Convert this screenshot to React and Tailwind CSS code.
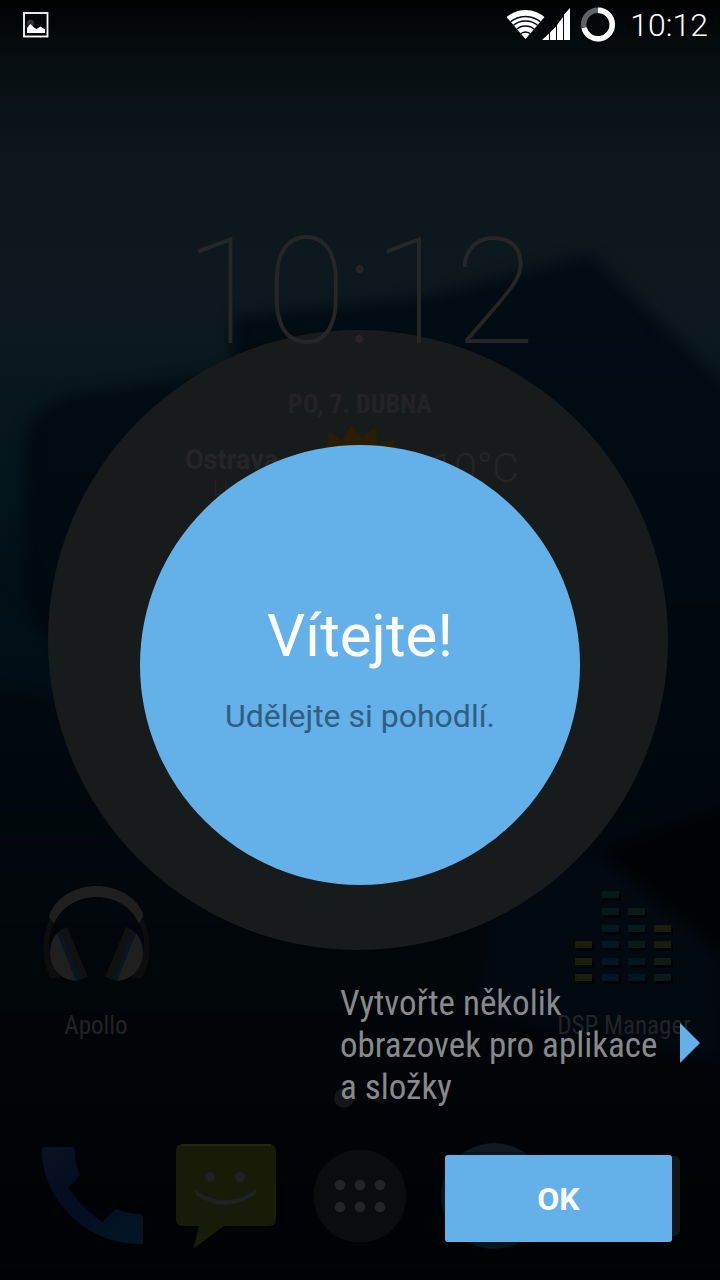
const condensed = "font-['Roboto_Condensed','Roboto',sans-serif]";

function Wallpaper() {
  return (
    <svg className="absolute inset-0 -z-10 h-full w-full" viewBox="0 0 720 1280" preserveAspectRatio="none" aria-hidden="true">
      <defs>
        <linearGradient id="sky" x1="0" y1="0" x2="0" y2="1">
          <stop offset="0" stopColor="#010202" />
          <stop offset="0.05" stopColor="#070e11" />
          <stop offset="0.12" stopColor="#0c171b" />
          <stop offset="0.24" stopColor="#0d191e" />
          <stop offset="0.38" stopColor="#04151c" />
          <stop offset="0.5" stopColor="#020d12" />
          <stop offset="0.65" stopColor="#01070a" />
          <stop offset="1" stopColor="#000203" />
        </linearGradient>
        <linearGradient id="shade" x1="0" y1="0" x2="0" y2="1">
          <stop offset="0" stopColor="#010c14" />
          <stop offset="0.5" stopColor="#01080d" />
          <stop offset="1" stopColor="#000203" />
        </linearGradient>
        <filter id="soft" x="-20%" y="-20%" width="140%" height="140%" colorInterpolationFilters="sRGB">
          <feGaussianBlur stdDeviation="7" />
        </filter>
      </defs>
      <rect width="720" height="1280" fill="url(#sky)" />
      <g filter="url(#soft)">
        <path d="M232 318 L430 296 L590 254 L740 400 V1300 H-20 V655 L45 655 Q25 620 24 560 L25 440 Q35 402 75 395 L232 372Z" fill="url(#shade)" />
        <path d="M-20 590 L60 645 L160 720 L-20 680Z" fill="#02121a" opacity="0.6" />
        <path d="M500 840 L600 860 L720 960 V1060 L480 1010Z" fill="#020911" />
        <path d="M600 850 L740 800 V960Z" fill="#000203" opacity="0.7" />
      </g>
    </svg>
  );
}

function Headphones() {
  return (
    <svg className="h-28 w-28" viewBox="0 0 112 112" aria-hidden="true">
      <path d="M10 34 Q-4 66 11 94 L22 94 Q2 68 13 40Z M103 34 Q117 66 102 94 L91 94 Q111 68 100 40Z" fill="#0d0d0e" />
      <path d="M10 29 C27 -7 86 -7 103 29 L103 33 L99 40 C84 4 29 4 14 40 L9 33Z" fill="#1f1f20" />
      <path d="M17 49 C4 64 9 95 36 97 L38 96Z M96 49 C109 64 104 95 77 97 L75 96Z" fill="#1f1f20" />
      <path d="M17 49 L21 46 L41 95 L36 97Z M96 49 L92 46 L72 95 L77 97Z" fill="#07171f" />
      <path d="M20 46 L27 43 L48 93 L40 96Z M93 46 L86 43 L65 93 L73 96Z" fill="#111112" />
    </svg>
  );
}

function Equalizer() {
  const bars = [
    [7, 80, '#191e0b'], [7, 97, '#191e0b'], [7, 113, '#191e0b'],
    [34, 30, '#07181a'], [34, 47, '#07181b'], [34, 64, '#07171d'], [34, 80, '#051722'], [34, 97, '#041526'], [34, 113, '#041526'],
    [60, 47, '#0c1a17'], [60, 64, '#081a1b'], [60, 80, '#0a191a'], [60, 97, '#04161e'], [60, 113, '#041620'],
    [86, 64, '#191e0b'], [86, 80, '#171d0e'], [86, 97, '#111b12'], [86, 113, '#0d1916'],
  ];
  return (
    <svg className="h-28 w-28" viewBox="0 23 112 112" aria-hidden="true">
      {bars.map(([x, y, c], i) => (
        <g key={i}>
          <rect x={x + 2} y={y + 3} width="17" height="7" fill="#000306" />
          <rect x={x} y={y} width="17" height="7" fill={c} />
        </g>
      ))}
    </svg>
  );
}

function HomeScreen() {
  return (
    <div className="col-start-1 row-start-1 flex flex-col pt-[210px]">
      <div className="text-center text-[148px] leading-[166px] font-thin text-[#262626]">10:12</div>
      <div className={`${condensed} mt-2 text-center text-[26px] leading-10 font-bold text-[#232324]`}>PO, 7. DUBNA</div>
      <div className="mx-auto grid w-[350px] grid-cols-3 text-[#242526]">
        <div className="pt-5">
          <div className="text-[27px] leading-8 font-bold">Ostrava</div>
          <div className="pl-7 text-[20px] leading-6 font-light">Li</div>
        </div>
        <svg className="h-[100px] w-[100px] justify-self-center" viewBox="0 0 100 100" aria-hidden="true">
          <path d="M19 8 L32 16 L41 1 L52 13 L65 3 L68 20 L85 15 L84 60 L10 60Z" fill="#2a1c05" />
        </svg>
        <div className="pt-5 pr-4 text-right text-[41px] leading-[48px] font-light">10°C</div>
      </div>
      <div className="mt-auto grid grid-cols-4 px-2 text-center text-[#222324]">
        <div className="flex flex-col items-center">
          <Headphones />
          <div className={`${condensed} mt-3 text-[25px] leading-9`}>Apollo</div>
        </div>
        <div className="col-start-4 flex flex-col items-center">
          <Equalizer />
          <div className={`${condensed} mt-3 text-[25px] leading-9 whitespace-nowrap`}>DSP Manager</div>
        </div>
      </div>
      <div className="mt-11 flex h-5 items-center justify-center gap-5 pr-1">
        <span className="h-5 w-5 rounded-full bg-[#141617]" />
        <span className="h-2 w-2 rounded-full bg-[#101213]" />
      </div>
      <div className="mt-8 mb-7 grid grid-cols-5 justify-items-center px-6">
        <svg className="h-28 w-28" viewBox="2 0 112 112" aria-hidden="true">
          <defs>
            <linearGradient id="phone" x1="0" y1="0" x2="1" y2="1">
              <stop offset="0" stopColor="#0b1220" />
              <stop offset="0.45" stopColor="#020d20" />
              <stop offset="1" stopColor="#031624" />
            </linearGradient>
          </defs>
          <path d="M11 7 H39 Q42 7 42 12 Q42 25 47 35 L35 48 Q50 68 69 82 L83 69 Q95 74 107 74 Q110 75 110 79 V104 C45 105 9 50 9 13 Q8 9 11 7Z" fill="url(#phone)" />
        </svg>
        <svg className="h-28 w-28" viewBox="0 0 112 112" aria-hidden="true">
          <path d="M13 4 H99 Q106 4 106 11 V79 Q106 86 99 86 H54 L23 109 L29 86 H13 Q6 86 6 79 V11 Q6 4 13 4Z" fill="#171b08" />
          <path d="M11 5 H101" stroke="#24270e" strokeWidth="2" />
          <circle cx="40" cy="37" r="5" fill="#202123" />
          <circle cx="70" cy="37" r="5" fill="#202123" />
          <path d="M25 50 Q55 70 86 50 V54 Q55 75 26 55Z" fill="#202123" />
        </svg>
        <svg className="h-28 w-28" viewBox="0 0 112 112" aria-hidden="true">
          <circle cx="56" cy="56" r="46.5" fill="#090d0e" />
          {[36, 56, 76].map((x) => (
            <g key={x} fill="#232425">
              <circle cx={x} cy="45" r="5.3" />
              <circle cx={x} cy="67" r="5.3" />
            </g>
          ))}
        </svg>
        <svg className="h-28 w-28" viewBox="0 0 112 112" aria-hidden="true">
          <circle cx="56" cy="56" r="53" fill="#03151d" />
          <path d="M26 12 Q56 -5 86 12Z" fill="#12191f" />
        </svg>
        <svg className="h-28 w-28" viewBox="0 0 112 112" aria-hidden="true">
          <rect x="5" y="16" width="102" height="80" rx="6" fill="#151617" />
        </svg>
      </div>
    </div>
  );
}

function StatusBar() {
  return (
    <header className="flex h-[50px] items-center justify-between pr-3 pl-[22px]">
      <svg className="h-7 w-7" viewBox="0 0 28 28" aria-label="Snímek obrazovky" role="img">
        <rect x="2" y="2" width="23.5" height="23.5" fill="none" stroke="#fff" strokeWidth="1.8" />
        <circle cx="8.5" cy="12" r="3.5" fill="#303436" />
        <path d="M5 22 V17 L8.5 13 L12 16.5 L14.5 18 L18.5 15.5 L23 18.5 V22Z" fill="#fff" />
      </svg>
      <div className="flex items-center">
        <svg className="h-10 w-16" viewBox="0 0 64 40" aria-label="Wi-Fi a signál" role="img">
          <defs>
            <clipPath id="fan"><path d="M19.5 34 L0 11.5 Q19.5 -4 39 11.5Z" /></clipPath>
          </defs>
          <g clipPath="url(#fan)">
            <circle cx="19.5" cy="34" r="29" fill="#fff" />
            <g fill="none" stroke="#050809" strokeWidth="1.3">
              <circle cx="19.5" cy="35" r="8" />
              <circle cx="19.5" cy="35" r="14" />
              <circle cx="19.5" cy="35" r="19" />
              <circle cx="19.5" cy="35" r="23.5" />
            </g>
          </g>
          <path d="M36 35 L43 28.5 V35Z M44 27.5 L50 21.5 V35 H44Z M51 20 L57 14 V35 H51Z M58 9.5 L64 3 V35 H58Z" fill="#fff" />
          <path d="M51 20 L57 12 V15Z" fill="#fff" />
        </svg>
        <svg className="ml-2.5 h-9 w-9" viewBox="0 0 36 36" aria-label="Baterie" role="img">
          <circle cx="18" cy="17.5" r="14.3" fill="none" stroke="#606466" strokeWidth="5.4" />
          <path d="M18 3.2 A14.3 14.3 0 1 1 4.1 20.8" fill="none" stroke="#fff" strokeWidth="5.4" />
        </svg>
        <time className="ml-3.5 text-[32px] leading-10 font-light text-white">10:12</time>
      </div>
    </header>
  );
}

function Welcome() {
  return (
    <div className="z-10 col-start-1 row-start-1 flex flex-col">
      <StatusBar />
      <main className="mt-auto flex flex-col pb-[38px]">
        <section className="mx-auto flex h-[440px] w-[440px] flex-col items-center rounded-full bg-[#64b0e9] pt-[155px] text-center">
          <h1 className="text-[60px] leading-[72px] text-white">Vítejte!</h1>
          <p className="mt-6 text-[32px] leading-10 text-[#315e80]">Udělejte si pohodlí.</p>
        </section>
        <div className="mt-[98px] mr-5 ml-[340px] flex items-center justify-between">
          <p className={`${condensed} text-[35px] leading-[42px] text-[#87898a]`}>
            Vytvořte několik<br />obrazovek pro aplikace<br />a složky
          </p>
          <svg className="mb-1.5 h-10 w-5 shrink-0" viewBox="0 0 20 40" aria-hidden="true">
            <path d="M0 0 L20 20 L0 40Z" fill="#64b0e9" />
          </svg>
        </div>
        <button type="button" className="mt-[46px] mr-12 h-[87px] w-[227px] self-end rounded-[3px] bg-[#64b0e9] text-[32px] leading-10 font-bold text-white">OK</button>
      </main>
    </div>
  );
}

export default function App() {
  return (
    <div className="relative isolate grid min-h-screen grid-cols-1 bg-[#010405] font-['Roboto',sans-serif]">
      <Wallpaper />
      <div className="col-start-1 row-start-1 mr-1 h-[620px] w-[620px] place-self-center rounded-full bg-[#181b1c]" />
      <HomeScreen />
      <Welcome />
    </div>
  );
}
